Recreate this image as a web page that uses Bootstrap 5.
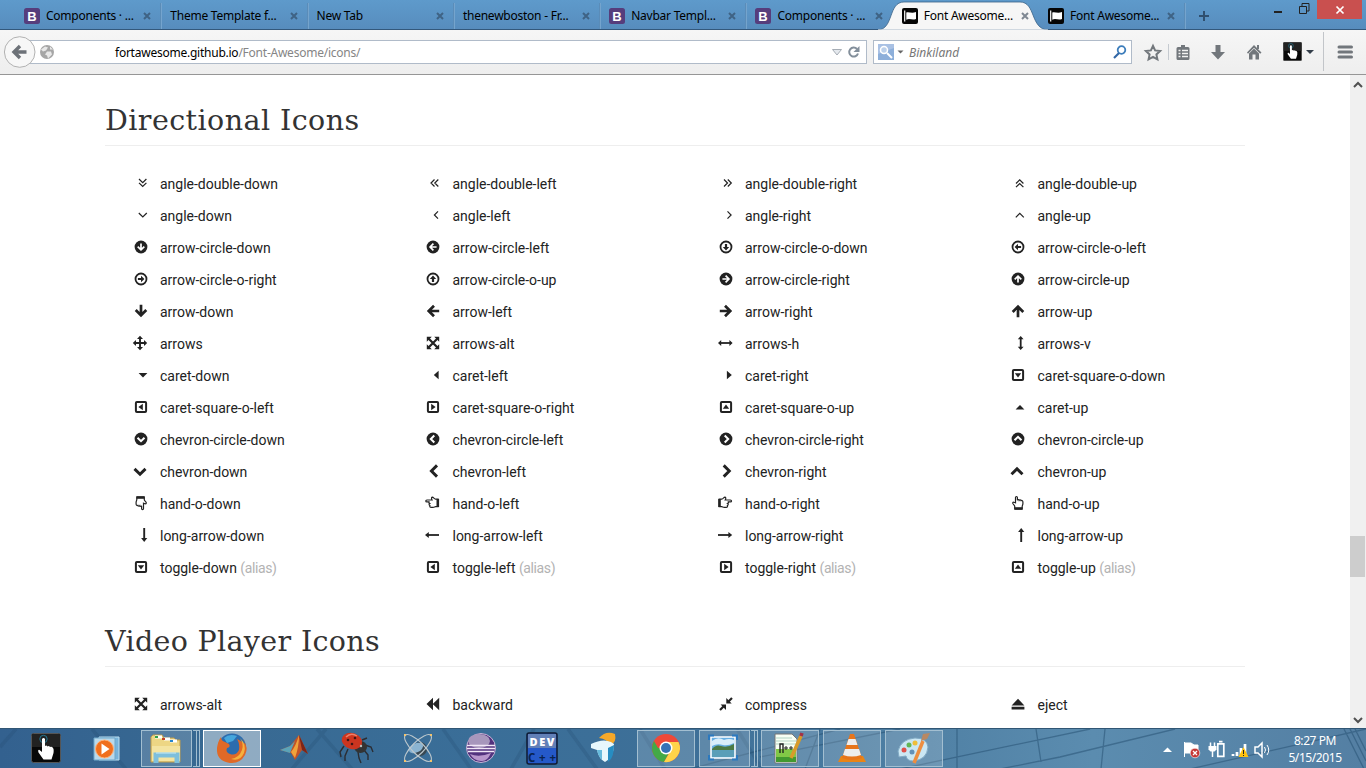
<!DOCTYPE html>
<html lang="en">
<head>
<meta charset="utf-8">
<title>Font Awesome Icons</title>
<link href="https://cdn.jsdelivr.net/npm/bootstrap@5.3.0/dist/css/bootstrap.min.css" rel="stylesheet">
<style>
body{width:1366px;height:768px;font-family:"Noto Sans",sans-serif;font-size:12px;color:#000}
svg{display:block;flex:none;overflow:visible}
.tabstrip{height:30px;background:linear-gradient(#5e9acb,#5a92c3 60%,#578cbd);border-bottom:1px solid #33587c;padding-left:16px}
.tb{width:146.3px;padding:2px 0 0 8px;gap:6px;line-height:30px;white-space:nowrap;position:relative}
.tb .ttl{flex:1;letter-spacing:-.24px}
.tb .cls{margin-right:11px}
.tb.edge::after{content:"";position:absolute;right:0;top:3px;height:26px;width:2px;background:linear-gradient(90deg,#4d80ad,#82b0d8)}
.curve{position:absolute;left:-20px;top:1px;z-index:0}
.tb>*:not(.curve){position:relative;z-index:1}
.winx{width:45px;height:19px;background:#c9504f}
.toolbar{height:45px;background:linear-gradient(#f6f6f6,#eee);border-bottom:1px solid #969696;padding-left:4px}
.field{height:24px;background:#fff;border:1px solid #b0bbc9}
.field span,.field em{position:relative;top:1px}
.urlbox{width:838px;margin-left:-7px}
.addr{margin-left:61px;letter-spacing:-.24px}
.backbtn{position:relative;z-index:1}
.view{height:653px;background:#fff}
.content{width:1350px;overflow:hidden;padding-top:25px}
.content .container{max-width:1170px;--bs-gutter-x:30px}
.content .row{--bs-gutter-x:30px}
h2{height:46px;font:400 28.5px/42px "DejaVu Serif",serif;color:#333;border-bottom:1px solid #eee;margin:0 0 21px;white-space:nowrap}
.h-a{letter-spacing:.44px}
.h-b{letter-spacing:.34px}
.second{margin-top:38px}
.ic{height:32px;margin-left:-15px;padding-left:41.9px;gap:12.1px;font:400 14px/32px "Roboto",sans-serif;letter-spacing:-.01px;color:#222;white-space:nowrap}
.ic span{padding-top:1px}
.ic svg{width:16px;height:16px;color:#222}
.ic i{font-style:normal;color:#b3b3b3;letter-spacing:-.4px}
.sbar{width:16px;background:#f0f0f0;padding:7px 4px 5px}
.thumb{width:15px;height:41px;margin:448px 0 0 -4px;background:#cdcdcd}
.taskbar{height:40px;background:linear-gradient(90deg,#33618f,#386992 15%,#3a6e98 35%,#3e7098 52%,#5081a5 68%,#5b8caf 80%,#547fa3);position:relative;overflow:hidden;border-top:1px solid #315674}
.wall{position:absolute;left:0;top:0}
.tk{width:62px;height:39px;position:relative}
.tk.open::before{content:"";position:absolute;left:2px;right:2px;top:1px;bottom:1px;border:1px solid #a3bfd1;background:#ffffff2b}
.tk.stack::before{right:9px}
.tk.stack::after{content:"";position:absolute;right:1px;top:1px;bottom:1px;width:7px;border:solid #a3bfd1;border-width:1px 1px 1px 0;background:linear-gradient(90deg,transparent 3px,#a3bfd1 3px,#a3bfd1 4px,transparent 4px)}
.tk.cur::before{background:#ffffff70;border-color:#fff}
.tk svg{position:relative}
.clock{color:#fff;line-height:17px;width:66px;letter-spacing:-.42px;margin-right:18px}
</style>
</head>
<body class="d-flex flex-column overflow-hidden">
<svg width="0" height="0" class="position-absolute">
<defs>
<symbol id="disc" viewBox="0 0 16 16"><circle cx="9" cy="8" r="6.4" fill="#222"/><path d="M9 4.4v6M5.7 7.6 9 10.9l3.3-3.3" fill="none" stroke="#fff" stroke-width="1.7"/></symbol>
<symbol id="ring" viewBox="0 0 16 16"><circle cx="9" cy="8" r="5.5" fill="none" stroke="#222" stroke-width="1.8"/><path d="M9 11.4 5.8 8h2.1V4.900h2.200v3.100h2.100z" fill="#222"/></symbol>
<symbol id="arr" viewBox="0 0 16 16"><path d="M9 1.800v9.700M3.700 7 9 12.300 14.300 7" fill="none" stroke="#222" stroke-width="2.700"/></symbol>
<symbol id="chevc" viewBox="0 0 16 16"><circle cx="9" cy="8" r="6.400" fill="#222"/><path d="M5.500 6.700 9 10.200l3.500-3.500" fill="none" stroke="#fff" stroke-width="2"/></symbol>
<symbol id="sqr" viewBox="0 0 16 16"><rect x="3.900" y="2.900" width="10.200" height="10.200" rx="1" fill="none" stroke="#222" stroke-width="2"/><path d="M5.800 6.200h6.400L9 10.600z" fill="#222"/></symbol>
<g id="g-hand"><path d="M2.200 4.200h2.600C6 4 7 2 8 2.200c1.200.3.8 1.800.2 2.800h5.200c1.500 0 1.500 1.900 0 1.900H10.700c1 .3.9 1.600 0 1.800.8.500.6 1.600-.3 1.900.4.900-.1 1.800-1.300 1.800H7.300c-1.200 0-1.700-.6-2.600-.7H2.200z" fill="#fff" stroke="#222" stroke-width="1.200"/><path d="M1.200 4h2.600v8H1.200z" fill="#222"/></g>
<symbol id="arrows-alt" viewBox="0 0 16 16"><path d="M4.500 3.500l9 9m0-9l-9 9" stroke="#222" stroke-width="2.200"/><path d="M2.800 1.800h5L2.800 6.800zm12.400 0v5L10.200 1.800zM2.800 14.200V9.200l5 5zm12.400 0h-5l5-5z" fill="#222"/></symbol>
<g id="x"><path d="M1 1l6 6M7 1L1 7" stroke="#3f6385" stroke-width="2"/></g>
<symbol id="bs" viewBox="0 0 16 16"><rect width="16" height="16" rx="2.500" fill="#563d7c"/><text x="8" y="12.700" text-anchor="middle" font-family="Liberation Sans" font-weight="700" font-size="13" fill="#fff">B</text></symbol>
<symbol id="flag" viewBox="0 0 16 16"><rect width="16" height="16" rx="2" fill="#050505"/><path d="M2.700 2.500v11" stroke="#fff" stroke-width="1.200"/><path d="M4.300 4.500C7 3.500 9.500 5.800 14 4v7c-4 1.500-6.500-1-9.700.8z" fill="#fff"/></symbol>
<symbol id="touch" viewBox="0 0 30 30"><rect x=".5" y=".5" width="29" height="29" rx="2" fill="#080808" stroke="#555"/><path d="M1 1h28v13H1z" fill="#222"/><circle cx="12.500" cy="6" r="3.700" fill="none" stroke="#247894"/><path d="M11 6q1.600-2 3 0v7q1.500-1 2.500.4 1.500-.8 2.500.5 2-.6 3 1.100 1 1 .5 5l-2 6.500h-8l-5-7q-1-3 1-2.600l2.500 2z" fill="#fff"/></symbol>
</defs></svg>

<header class="tabstrip d-flex flex-none">
<div class="tb edge d-flex align-items-center"><svg width="16" height="16"><use href="#bs"/></svg><span class="ttl">Components · ...</span><svg class="cls" width="8" height="8"><use href="#x"/></svg></div>
<div class="tb edge d-flex align-items-center"><span class="ttl">Theme Template f...</span><svg class="cls" width="8" height="8"><use href="#x"/></svg></div>
<div class="tb edge d-flex align-items-center"><span class="ttl">New Tab</span><svg class="cls" width="8" height="8"><use href="#x"/></svg></div>
<div class="tb edge d-flex align-items-center"><span class="ttl">thenewboston - Fr...</span><svg class="cls" width="8" height="8"><use href="#x"/></svg></div>
<div class="tb edge d-flex align-items-center"><svg width="16" height="16"><use href="#bs"/></svg><span class="ttl">Navbar Templ...</span><svg class="cls" width="8" height="8"><use href="#x"/></svg></div>
<div class="tb d-flex align-items-center"><svg width="16" height="16"><use href="#bs"/></svg><span class="ttl">Components · ...</span><svg class="cls" width="8" height="8"><use href="#x"/></svg></div>
<div class="tb d-flex align-items-center"><svg class="curve" width="190" height="29"><path d="M4 29C20 28 14 1 30 1H146C162 1 156 28 174 29z" fill="#f6f6f6" stroke="#3b6388" stroke-width=".8"/><path d="M4 28.600h170V30H4z" fill="#f6f6f6"/></svg><svg width="16" height="16"><use href="#flag"/></svg><span class="ttl">Font Awesome...</span><svg class="cls" width="8" height="8"><path d="M1 1l6 6M7 1L1 7" stroke="#7f8893" stroke-width="2"/></svg></div>
<div class="tb edge d-flex align-items-center"><svg width="16" height="16"><use href="#flag"/></svg><span class="ttl">Font Awesome...</span><svg class="cls" width="8" height="8"><use href="#x"/></svg></div>
<svg class="ms-2 ps-1 mt-2 pt-1" width="16" height="16"><path d="M6-1v10M1 4h10" stroke="#30506f" stroke-width="2"/></svg>
<div class="d-flex ms-auto me-1">
<svg width="43" height="20"><path d="M0 12h8" stroke="#222" stroke-width="2"/><path d="M25.500 6.500h7v7h-7zM28 6V3.500h7V11h-2" fill="none" stroke="#222"/></svg>
<div class="winx d-flex align-items-center justify-content-center"><svg width="8" height="8"><path d="M.5.5l7 7M7.500.5l-7 7" stroke="#fff" stroke-width="1.700"/></svg></div></div>
</header>

<nav class="toolbar d-flex align-items-center">
<svg class="backbtn" width="32" height="32"><circle cx="15.700" cy="16" r="15.300" fill="#f7f7f7" stroke="#b2b2b2"/><path d="M22.500 16H11M16 10l-6 6 6 6" fill="none" stroke="#6d7278" stroke-width="3.400"/></svg>
<div class="field urlbox d-flex align-items-center">
<svg class="ms-2" width="16" height="16"><circle cx="9" cy="8" r="7" fill="#a6a6a6"/><path d="M3 5.500l4-3 3 1-2 3-3 1zM9 7.500l4 0 1 3-4 4-1-3-2-1zM12 2.500l3 3h-3z" fill="#e8e8e8"/></svg>
<span class="addr">fortawesome.github.io<span style="color:#858585;top:0">/Font-Awesome/icons/</span></span>
<svg class="ms-auto me-1" width="30" height="14"><path d="M.500 4.500h9L5 10z" fill="#e5e9ee" stroke="#a6adb5"/><path d="M25 4A4.500 4.500 0 1 0 26 8.500" fill="none" stroke="#838f9b" stroke-width="2"/><path d="M27.500 1v6h-6z" fill="#838f9b"/></svg>
</div>
<div class="field d-flex align-items-center" style="width:259px;margin-left:6px">
<svg class="ms-1" width="30" height="16"><rect width="16" height="16" fill="#a9c1e4"/><path d="M0 10L16 4v12H0z" fill="#8dafda"/><circle cx="6" cy="6" r="3.500" fill="#bcd0ea" stroke="#fff" stroke-width="1.500"/><path d="M9 9l5 5" stroke="#fff" stroke-width="2"/><path d="M19.500 6.500h6l-3 3z" fill="#666"/></svg>
<em style="color:#777;margin-left:1px">Binkiland</em>
<svg class="ms-auto me-1" width="14" height="14"><circle cx="8.500" cy="5" r="3.800" fill="none" stroke="#3c7dbb" stroke-width="1.800"/><path d="M6 8L1 13" stroke="#3267a6" stroke-width="2.200"/></svg>
</div>
<svg width="230" height="44" fill="#72777c"><path d="M21 15.800l2.100 4.600 5 .6-3.700 3.400 1 5-4.400-2.500-4.400 2.500 1-5-3.700-3.400 5-.6z" fill="none" stroke="#72777c" stroke-width="2"/><path d="M36.500 14v16" stroke="#c5cad0"/><path d="M46 17h3v-2h4v2h3q1.500 0 1.500 1.500V28.500q0 1.500-1.500 1.500H46q-1.500 0-1.500-1.500V18.500Q44.500 17 46 17zm.5 2.700v1.500h2v-1.500zm3.500 0v1.500h6v-1.500zm-3.500 3v1.500h2v-1.500zm3.500 0v1.500h6v-1.500zm-3.500 3v1.500h2v-1.500zm3.500 0v1.500h6v-1.500z" fill-rule="evenodd"/><path d="M83.500 15h5v7h4.500l-7 7.500-7-7.500h4.500zM115 22.500l7-7.500 7.500 7.500-1.300 1.200-6.200-6-6 6z"/><path d="M117 23.500l5-5 5 5V29.500h-3.500v-5h-3v5H117zM125 15h2v4h-2z"/><path d="M174 20h8l-4 4z" fill="#333d49"/><path d="M191.500 2v39" stroke="#c2c5c9"/><path d="M207 17h12.500M207 22h12.500M207 27h12.500" stroke="#72777c" stroke-width="3" stroke-linecap="round"/><g transform="translate(151 12)"><use href="#touch" width="19" height="19"/></g></svg>
</nav>

<div class="view d-flex">
<main class="content"><div class="container">
<h2 class="h-a">Directional Icons</h2>
<div class="row" id="directional"></div>
<h2 class="second h-b">Video Player Icons</h2>
<div class="row" id="video"></div>
</div></main>
<aside class="sbar d-flex flex-column"><svg width="8" height="6"><path d="M0 5l4-4 4 4" fill="none" stroke="#505050" stroke-width="2"/></svg><div class="thumb"></div><svg class="mt-auto" width="8" height="6"><path d="M0 1l4 4 4-4" fill="none" stroke="#505050" stroke-width="2"/></svg></aside>
</div>

<footer class="taskbar d-flex">
<svg class="wall" width="1366" height="40" fill="none"><path d="M0 18l16-18M92 0l34 40M292 40l34-40M317 0l35 40M443 0l28 40M511 40l23-40M568 0l29 40M640 0l25 40M737 0l25 40" stroke="#234d6f" stroke-opacity=".25" stroke-width="3.500"/><path d="M690 40l150-40M760 28l140-28M805 40l15-40M900 40l190-40M957 0v40M1036 0l5 33M1000 40l60-12 115-28M1105 0l-4 40M1190 40l176-40M1350 0l16 32M1355 0l11 22M1344 0l20 40" stroke="#234d6f" stroke-opacity=".5" stroke-width="1.300"/></svg>
<div class="d-flex position-relative">
<div class="tk" style="width:77px"><svg width="77" height="39"><use href="#touch" x="31" y="4" width="30" height="30"/></svg></div>
<div class="tk"><svg width="62" height="39"><path d="M22 8h20v23H22z" fill="#78b4db" stroke="#bcdef0"/><path d="M17 9h21v22H17z" fill="#b8d9ec" stroke="#6fa7ca"/><circle cx="27.500" cy="20" r="9" fill="#f06f1e" stroke="#ffb27a"/><path d="M24.500 14.500v11l8-5.500z" fill="#fff"/></svg></div>
<div class="tk open stack"><svg width="62" height="39"><path d="M12 8l2-2h9l2 3h10l2 2h4v22H12z" fill="#edd684" stroke="#bd9d4e"/><path d="M13 17h28v15H13z" fill="#f4e4a1"/><path d="M16 8h7M25 10h6M31 12h7" stroke="#fff" stroke-width="3"/><path d="M16 8h3" stroke="#32a04a" stroke-width="2"/><path d="M23 10h3" stroke="#c44227" stroke-width="2"/><path d="M31 12h3" stroke="#2585cd" stroke-width="2"/><path d="M17 34V26h21v8" fill="none" stroke="#7dbfdc" stroke-width="5"/><path d="M17 24h20" stroke="#c9ebf5"/></svg></div>
<div class="tk open cur"><svg width="62" height="39"><circle cx="31" cy="18.500" r="14" fill="#2c6cae"/><path d="M23 9q5-5 13-2l-4 5-6 2z" fill="#45a6dc"/><path d="M20 8q0 4 4 5l4 2q2 3-2 4-2 4 3 6 6 2 9-4 1-6-2-11 5 2 7 5 2-2-1-5 6 9 2 16-5 9-15 8Q15 32 16 19q1-7 4-11z" fill="#e06927"/><path d="M39 9q4 6 2 12-3 8-11 9 9 3 13-6 3-8-4-15z" fill="#f6b13c"/></svg></div>
<div class="tk"><svg width="62" height="39"><path d="M17 21l10-4 9-11 9 19-6-4-7 10-4-7z" fill="#c35227"/><path d="M17 21l10-4 5-5-5 12z" fill="#5ba3b8"/><path d="M36 6q0 12-4 23l-4-6q5-6 8-17z" fill="#f0a33c"/><path d="M36 6l3 15 6 4z" fill="#7d2518"/></svg></div>
<div class="tk"><svg width="62" height="39"><path d="M19 17l-4 6 1 5M23 20l-3 7v5M33 23l1 6 2 5M39 21l4 5v5M40 16l6 2 2 5M37 11l5-2" fill="none" stroke="#2b2d33" stroke-width="1.400"/><ellipse cx="35.500" cy="18" rx="6.500" ry="6" fill="#333"/><ellipse cx="27" cy="12" rx="10.500" ry="8" transform="rotate(20 27 12)" fill="#cb3520"/><path d="M21 8q5-5 11-1" stroke="#ec8068" stroke-width="1.500" fill="none"/><circle cx="23" cy="11" r="1.300" fill="#401515"/><circle cx="30" cy="9" r="1.300" fill="#401515"/><circle cx="27" cy="15" r="1.300" fill="#401515"/><circle cx="36" cy="17" r="1.200" fill="#bbb"/></svg></div>
<div class="tk"><svg width="62" height="39"><circle cx="33" cy="20" r="7" fill="#384852"/><ellipse cx="29" cy="19" rx="7.500" ry="4.500" transform="rotate(-25 29 19)" fill="#8bb4d1"/><g fill="none" stroke="#bdc8cd" stroke-width="1.100"><ellipse cx="31" cy="19" rx="18" ry="6" transform="rotate(45 31 19)"/><ellipse cx="31" cy="19" rx="18" ry="6" transform="rotate(-45 31 19)"/></g><path d="M17 6h2M43 6h2M17 32h2M43 32h2" stroke="#f3c36c" stroke-width="2"/></svg></div>
<div class="tk"><svg width="62" height="39"><circle cx="32" cy="19" r="14.500" fill="#52327e" stroke="#c8b6d7"/><ellipse cx="30" cy="12" rx="11" ry="7" fill="#a797bc"/><path d="M18 16.500h28M18 19.500h28M19 22.500h26" stroke="#f1e8f7" stroke-width="1.500"/><path d="M21 25q9 4 21-1-4 9-10 8-7 0-11-7z" fill="#b896cc"/></svg></div>
<div class="tk"><svg width="62" height="39"><rect x="16" y="4" width="30" height="31" rx="2" fill="#2559c9" stroke="#101b31" stroke-width="1.500"/><path d="M17 5h28v14H17z" fill="#6280b7"/><text x="31" y="17" text-anchor="middle" font-family="Open Sans" font-size="11" font-weight="800" fill="#fff" textLength="25">DEV</text><text x="31" y="32.500" text-anchor="middle" font-family="Open Sans" font-size="11.500" font-weight="700" fill="#09234f" textLength="28">C++</text></svg></div>
<div class="tk"><svg width="62" height="39"><path d="M26 9q7-8 16-4 2 9-5 11-3-6-11-7z" fill="#f5a829"/><path d="M18 15q12-6 20-2l3 2q0 14-9 18-6-3-8-12l-6-2z" fill="#e7f7fc"/><path d="M35 19l6-3q0 13-6 17z" fill="#278dc2"/><path d="M24 21h5v10q-4-4-5-10z" fill="#67bbdd"/></svg></div>
<div class="tk open"><svg width="62" height="39"><circle cx="31" cy="19" r="14" fill="#ef4939"/><path d="M19 12A14 14 0 0 0 29 33l6-11-4-3H23z" fill="#43a947"/><path d="M31 13h12.500A14 14 0 0 1 29 33l7-12z" fill="#ffd34a"/><circle cx="31" cy="19" r="6.500" fill="#fff"/><circle cx="31" cy="19" r="5" fill="#3572b7"/></svg></div>
<div class="tk open stack"><svg width="62" height="39"><path d="M14 8h24v21H14z" fill="#67afe3" stroke="#fff" stroke-width="1.500"/><path d="M15 20q4-5 9-3 6 2 13-2v7H15z" fill="#4c7a44"/><path d="M15 21h22v7H15z" fill="#5a9eb8"/><path d="M15 12q6-5 12-1 5-2 10 0v3q-6 3-11 2-6-2-11 1z" fill="#d9eefb"/><path d="M12 11V6.500h5M35 6.500h5V11M40 26v4.500h-5M17 30.500h-5V26" fill="none" stroke="#2b79bf" stroke-width="2"/></svg></div>
<div class="tk open"><svg width="62" height="39"><path d="M16 5h17l5 5v24H16z" fill="#f8fff4" stroke="#777"/><path d="M17 20h20v13H17z" fill="#82c846"/><path d="M17 28h20v5H17z" fill="#42992f"/><path d="M17 9h16M17 12h20M17 15h20" stroke="#b2d3c4"/><path d="M21 24v-9h3v9" fill="none" stroke="#222" stroke-width="1.400"/><path d="M25 19h4M27 17v4M30 19h4M32 17v4" stroke="#222"/><path d="M32 29L42 7" stroke="#d89b2a" stroke-width="3.500"/><path d="M42 7l1-3" stroke="#a43246" stroke-width="3.500"/></svg></div>
<div class="tk open"><svg width="62" height="39"><path d="M20 27h22l3 6H17z" fill="#e98416"/><path d="M29 5h4l8 24q-10 4-20 0z" fill="#e7751b"/><path d="M27.500 10h7l2 6H25.500zM24 20h14l2 6q-9 3-18 0z" fill="#ededed"/></svg></div>
<div class="tk open"><svg width="62" height="39"><path d="M15 22q3-12 17-13 12 0 13 9-1 13-15 14-6 0-7-5l-7 1z" fill="#cbe7f3" stroke="#81aac4"/><circle cx="21" cy="21" r="2.500" fill="#de514a"/><circle cx="26" cy="16" r="2.500" fill="#62b655"/><circle cx="32" cy="14" r="2.500" fill="#efbe39"/><circle cx="29" cy="23" r="2.500" fill="#6391b8"/><path d="M31 34l9-22" stroke="#ed8e40" stroke-width="3.500"/><path d="M38 12l2-7 7-1-3 6z" fill="#b98862"/></svg></div>
</div>
<div class="d-flex ms-auto position-relative align-items-center">
<svg width="119" height="39"><path d="M0 23l4.500-4.500L9 23z" fill="#fff"/><path d="M21.500 13v15M22 14h6l3 2h4v8H22z" stroke="#fff" fill="#fff"/><circle cx="32" cy="24" r="4.800" fill="#c63836" stroke="#fff" stroke-width=".6"/><path d="M30 22l4 4m0-4l-4 4" stroke="#fff" stroke-width="1.300"/><path d="M47.500 13.500v4M51.500 13.500v4" stroke="#fff" stroke-width="1.500"/><path d="M45.500 17h8v3.500l-2 2h-4l-2-2z" fill="#fff"/><path d="M49.500 22v6" stroke="#fff" stroke-width="1.500"/><path d="M54.800 14.800h6v12.500h-6zM56 12.700h3.500" fill="none" stroke="#fff" stroke-width="1.700"/><path d="M70 27v-2M74 27v-4M78 27v-8M82 27V15" stroke="#fff" stroke-width="2.700"/><path d="M80.500 18l5 10h-10z" fill="#ffc20e"/><path d="M80.500 21v4m0 1v1" stroke="#222"/><path d="M92 18h3l4-4v14l-4-4h-3z" fill="none" stroke="#fff" stroke-width="1.500"/><path d="M101.500 18q2 3 0 6M104 16q3.500 5 0 10" fill="none" stroke="#fff"/></svg>
<div class="clock text-center">8:27 PM<br>5/15/2015</div>
</div>
</footer>
<script src="https://cdn.jsdelivr.net/npm/bootstrap@5.3.0/dist/js/bootstrap.bundle.min.js"></script>
<script>
// Each direction is a rotation of the downward form around the icon centre.
const ROT = {down: 0, left: 90, up: 180, right: 270};
const line = (d, w) => `<path d="${d}" fill="none" stroke="#222" stroke-width="${w}"/>`;
const fill = d => `<path d="${d}" fill="#222"/>`;
const turn = (dir, body) => `<g transform="rotate(${ROT[dir]} 9 8)">${body}</g>`;
const exact = {
 'angle-double-down': line('M7 4l3.700 3.700L14.400 4M7 7.800l3.700 3.700 3.700-3.700', 1.2),
 'angle-double-left': line('M10.500 4.500L7 8l3.500 3.500M14.300 4.500L10.800 8l3.500 3.500', 1.2),
 'angle-double-right': line('M7 4.500L10.500 8 7 11.500M10.800 4.500L14.300 8l-3.500 3.500', 1.2),
 'angle-double-up': line('M7 8.500l3.700-3.700L14.400 8.500M7 12.200l3.700-3.700 3.700 3.700', 1.2),
 'angle-down': line('M6.800 6l4 4 4-4', 1.2),
 'angle-left': line('M14 4.400L10.400 8 14 11.600', 1.2),
 'angle-right': line('M10.500 4.400L14.100 8l-3.600 3.600', 1.2),
 'angle-up': line('M6.800 10.400l4-4 4 4', 1.2),
 'arrows': line('M8 3.500v9M3.500 8h9', 1.9) + fill('M8 .8l3 3.200H5zM8 15.200l3-3.200H5zM.8 8l3.200-3v6zM15.200 8l-3.200-3v6z'),
 'arrows-alt': '<use href="#arrows-alt"/>',
 'arrows-h': line('M3.500 8h9.500', 1.8) + fill('M1 8l3.200-3v6zM15.600 8l-3.200-3v6z'),
 'arrows-v': line('M11.700 3.500v9', 1.8) + fill('M11.700 1l2.900 3.300H8.800zM11.700 15l2.900-3.300H8.800z'),
 'caret-down': fill('M6.600 5.900h8.800L11 10.400z'),
 'caret-left': fill('M14.600 3.700v8.600L9.800 8z'),
 'caret-right': fill('M9.900 3.700v8.600L14.800 8z'),
 'caret-up': fill('M6.600 10.400h8.800L11 5.900z'),
 'chevron-down': line('M2.500 5.900L8 11.300 13.500 5.900', 2.9),
 'chevron-up': line('M2.500 11.300L8 5.900l5.500 5.400', 2.9),
 'chevron-left': line('M13 2.400L7.400 8l5.600 5.600', 2.9),
 'chevron-right': line('M6.700 2.400L12.300 8l-5.600 5.600', 2.9),
 'hand-o-right': '<use href="#g-hand"/>',
 'hand-o-left': '<g transform="translate(16.300 0) scale(-1 1)"><use href="#g-hand"/></g>',
 'hand-o-up': '<g transform="translate(1.500 16) rotate(-90)"><use href="#g-hand"/></g>',
 'hand-o-down': '<g transform="translate(16.500 0) rotate(90)"><use href="#g-hand"/></g>',
 'long-arrow-down': line('M12.200 1v11', 1.9) + fill('M12.200 14.900l-3.100-3.800h6.200z'),
 'long-arrow-up': line('M12.200 15V4', 1.9) + fill('M12.200 1.100L9.100 4.900h6.200z'),
 'long-arrow-left': line('M15 8H4', 1.8) + fill('M1 8l3.800-3v6z'),
 'long-arrow-right': line('M1 8h11', 1.8) + fill('M15.200 8l-3.800-3v6z'),
 'backward': fill('M9 1.800v12.400L2.500 8zM15.200 1.800v12.400L8.700 8z'),
 'compress': line('M3 14l4-4M15 2l-4 4', 2.2) + fill('M3.600 8.500h5.400v5.400zM9.300 2v5.400h5.400z'),
 'eject': fill('M2.600 9.500L9 2.800l6.400 6.700zM2.600 10.800h12.800v2.800H2.600z')
};
function glyph(name) {
  if (exact[name]) return exact[name];
  const dir = name.split('-').pop();
  const kind = /^arrow-circle-o/.test(name) ? 'ring' : /^arrow-circle/.test(name) ? 'disc' : /^arrow-/.test(name) ? 'arr' : /^chevron-circle/.test(name) ? 'chevc' : 'sqr';
  return turn(dir, `<use href="#${kind}"/>`);
}
function show(id, names) {
  document.getElementById(id).innerHTML = names.trim().split(/\s+/).map(n => {
    return `<div class="col-3"><div class="ic d-flex align-items-center"><svg viewBox="0 0 16 16">${glyph(n)}</svg><span>${n}${n.startsWith('toggle') ? ' <i>(alias)</i>' : ''}</span></div></div>`;
  }).join('');
}
show('directional', `angle-double-down angle-double-left angle-double-right angle-double-up
angle-down angle-left angle-right angle-up
arrow-circle-down arrow-circle-left arrow-circle-o-down arrow-circle-o-left
arrow-circle-o-right arrow-circle-o-up arrow-circle-right arrow-circle-up
arrow-down arrow-left arrow-right arrow-up
arrows arrows-alt arrows-h arrows-v
caret-down caret-left caret-right caret-square-o-down
caret-square-o-left caret-square-o-right caret-square-o-up caret-up
chevron-circle-down chevron-circle-left chevron-circle-right chevron-circle-up
chevron-down chevron-left chevron-right chevron-up
hand-o-down hand-o-left hand-o-right hand-o-up
long-arrow-down long-arrow-left long-arrow-right long-arrow-up
toggle-down toggle-left toggle-right toggle-up`);
show('video', 'arrows-alt backward compress eject');
</script>
</body>
</html>
